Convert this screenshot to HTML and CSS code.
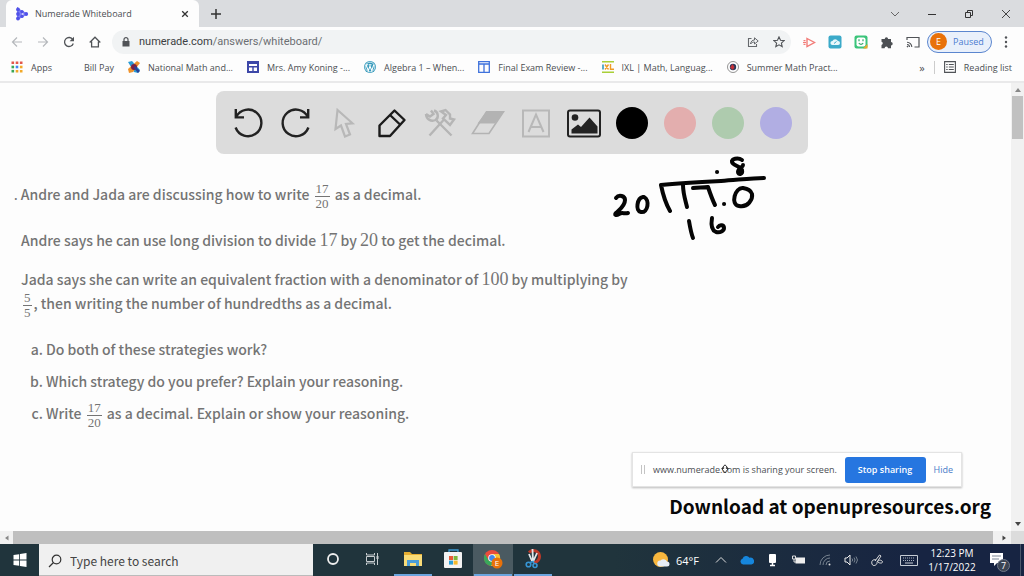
FILE: index.html
```html
<!DOCTYPE html>
<html lang="en">
<head>
<meta charset="utf-8">
<title>Numerade Whiteboard</title>
<link rel="stylesheet" href="styles.css">
</head>
<body>
<header class="browser">
  <div class="tabs">
    <div class="tab">
      <svg class="i14" viewBox="0 0 14 14"><path d="M3 2.500 11.200 7 3 11.500V2.500L7 9.400M3 11.500 7 4.600" fill="none" stroke="#7f80f5" stroke-width="2"/><g fill="#5051e8"><circle cx="3" cy="2.500" r="1.900"/><circle cx="3" cy="7" r="1.900"/><circle cx="3" cy="11.500" r="1.900"/><circle cx="7" cy="4.600" r="1.700"/><circle cx="7" cy="9.400" r="1.700"/><circle cx="11.200" cy="7" r="1.900"/></g></svg>
      <span class="tab-title">Numerade Whiteboard</span>
      <button class="plain" aria-label="Close tab"><svg class="i8" viewBox="0 0 8 8"><path d="m1.200 1.200 5.600 5.600m0-5.600L1.200 6.800" stroke="#333" stroke-width="1.300"/></svg></button>
    </div>
    <button class="plain new-tab" aria-label="New tab"><svg class="i10" viewBox="0 0 10 10"><path d="M5 0v10M0 5h10" stroke="#333" stroke-width="1.500"/></svg></button>
    <div class="window-buttons">
      <button class="plain" aria-label="Search tabs"><svg class="i10" viewBox="0 0 10 10"><path d="m1 3 4 4 4-4" fill="none" stroke="#666"/></svg></button>
      <button class="plain" aria-label="Minimize"><svg class="i10" viewBox="0 0 10 10"><path d="M1 5.500h8" stroke="#333"/></svg></button>
      <button class="plain" aria-label="Restore"><svg class="i10" viewBox="0 0 10 10"><path d="M1.500 3.500h5v5h-5zM3.500 3.500v-2h5v5h-2" fill="none" stroke="#333"/></svg></button>
      <button class="plain" aria-label="Close"><svg class="i10" viewBox="0 0 10 10"><path d="m1 1 8 8m0-8L1 9" stroke="#444"/></svg></button>
    </div>
  </div>
  <div class="toolbar">
    <div class="nav">
      <button class="plain" aria-label="Back"><svg class="i12" viewBox="0 0 12 12"><path d="M11 6H1.500M6 1.500 1.500 6 6 10.500" fill="none" stroke="#b5b8bc" stroke-width="1.200"/></svg></button>
      <button class="plain" aria-label="Forward"><svg class="i12" viewBox="0 0 12 12"><path d="M1 6h9.500M6 1.500 10.500 6 6 10.500" fill="none" stroke="#b5b8bc" stroke-width="1.200"/></svg></button>
      <button class="plain" aria-label="Reload"><svg class="i12" viewBox="0 0 12 12"><path d="M9.800 3.500A4.500 4.500 0 1 0 10.300 7.500" fill="none" stroke="#505357" stroke-width="1.300"/><path d="M11 .8v4.400H6.600z" fill="#505357"/></svg></button>
      <button class="plain" aria-label="Home"><svg class="i12" viewBox="0 0 12 12"><path d="M.7 6.500 6 1.200l5.300 5.300M2.600 5.500v5.300h6.800V5.500" fill="none" stroke="#505357" stroke-width="1.300"/></svg></button>
    </div>
    <div class="omnibox">
      <svg class="i10" viewBox="0 0 10 10"><path d="M1.500 4h7v5.500h-7z" fill="#505357"/><path d="M3 4V2.600a2 2 0 0 1 4 0V4" fill="none" stroke="#505357" stroke-width="1.200"/></svg>
      <span class="url">numerade.com<span>/answers/whiteboard/</span></span>
      <button class="plain" aria-label="Share"><svg class="i12" viewBox="0 0 12 12"><path d="M4.500 2.500h-3v8h8V8" fill="none" stroke="#65686c" stroke-width="1.100"/><path d="M3.500 8c.3-2.500 1.700-4 4-4V1.800L11.200 5 7.500 8V6C5.800 6 4.500 6.700 3.500 8z" fill="none" stroke="#65686c"/></svg></button>
      <button class="plain" aria-label="Bookmark"><svg class="i12" viewBox="0 0 12 12"><path d="m6 .9 1.500 3.400 3.700.3-2.800 2.500.8 3.600L6 8.800l-3.200 1.900.8-3.600L.8 4.600l3.700-.3z" fill="none" stroke="#505357" stroke-width="1.100"/></svg></button>
    </div>
    <div class="extensions">
      <svg class="i14" viewBox="0 0 14 14"><path d="M5 3.500 12.500 7.500 5 11.500z" fill="none" stroke="#f27c78" stroke-width="1.400"/><path d="M1.500 5.700h2M1 7.500h3M1.500 9.300h2" stroke="#f27c78" stroke-width="1.200"/></svg>
      <svg class="i14" viewBox="0 0 14 14"><rect x=".5" y=".5" width="13" height="13" rx="2" fill="#3baac9"/><path d="M4.400 10a2 2 0 0 1 0-4 3 3 0 0 1 5.500 0 2 2 0 0 1 .2 4z" fill="#e7f7fb"/><path d="m6 8.500 2.500-2" stroke="#3baac9"/></svg>
      <svg class="i14" viewBox="0 0 14 14"><rect x=".5" y=".5" width="13" height="13" rx="2" fill="#3bc47a"/><path d="M13.500 9v4.500H9z" fill="#f0a52b"/><rect x="2.500" y="2.500" width="9" height="9" rx="2" fill="#fff"/><path d="M5 4.300v2m4-2v2M4.800 8.200Q7 10.500 9.200 8.200" fill="none" stroke="#33a86b" stroke-width="1.200"/></svg>
      <svg class="i14" viewBox="0 0 14 14"><path d="M1.500 4h3.200a1.700 1.700 0 1 1 3.400 0H11v3a1.700 1.700 0 1 1 0 3.400v2.800H8a1.700 1.700 0 0 0-3.400 0H1.500V10a1.700 1.700 0 0 0 0-3.300z" fill="#4c4f53"/></svg>
      <svg class="i14" viewBox="0 0 14 14"><path d="M1 5V2.500h12v9.500H8.500" fill="none" stroke="#505357" stroke-width="1.200"/><path d="M1 7.200A4.800 4.800 0 0 1 5.800 12M1 9.500A2.500 2.500 0 0 1 3.500 12" fill="none" stroke="#505357" stroke-width="1.100"/><circle cx="1.500" cy="11.600" r=".8" fill="#505357"/></svg>
    </div>
    <button class="profile"><span class="avatar">E</span>Paused</button>
    <button class="plain menu" aria-label="Menu"><svg class="i12" viewBox="0 0 12 12"><g fill="#505357"><circle cx="6" cy="1.500" r="1.200"/><circle cx="6" cy="6" r="1.200"/><circle cx="6" cy="10.500" r="1.200"/></g></svg></button>
  </div>
  <nav class="bookmarks">
    <a href="#"><svg class="i12" viewBox="0 0 12 12"><path d="M.5.500h2.600v2.600H.5zM4.700.500h2.600v2.600H4.700zM8.900.500h2.600v2.600H8.900z" fill="#e2574c"/><path d="M.5 4.700h2.600v2.600H.5z" fill="#3aa757"/><path d="M4.700 4.700h2.600v2.600H4.700z" fill="#4285f4"/><path d="M8.900 4.700h2.600v2.600H8.900z" fill="#f2a928"/><path d="M.5 8.900h2.600v2.600H.5z" fill="#3aa757"/><path d="M4.700 8.900h2.600v2.600H4.700zM8.900 8.900h2.600v2.600H8.900z" fill="#f2a928"/></svg>Apps</a>
    <a href="#" class="no-icon">Bill Pay</a>
    <a href="#"><svg class="i12" viewBox="0 0 12 12"><path d="M0 1 4 0l8 9-2 3-4-1z" fill="#2a9bd6"/><path d="m12 2-3-2-9 8 1 4 4-1z" fill="#f0932b"/><circle cx="6" cy="6" r="3" fill="#762248"/><path d="m7 5 5 5-2 2-4-5z" fill="#27439a"/></svg>National Math and...</a>
    <a href="#"><svg class="i12" viewBox="0 0 12 12"><path fill="#3d47a8" d="M0 0h12v12H0z"/><path d="M2 3h8v2H2zM2 6.500h3.300V10H2zM6.700 6.500H10V10H6.700z" fill="#fff"/></svg>Mrs. Amy Koning -...</a>
    <a href="#"><svg class="i12" viewBox="0 0 12 12"><circle cx="6" cy="6" r="6" fill="#3499bb"/><circle cx="6" cy="6" r="4.800" fill="none" stroke="#fff" stroke-width=".7"/><path d="m2 3.700 2.300 6L6 5l1.800 4.700 2-6M1.800 3.700h2.500M5 3.700h2.500" fill="none" stroke="#fff" stroke-width="1.100"/></svg>Algebra 1 – When...</a>
    <a href="#"><svg class="i12" viewBox="0 0 12 12"><path d="M.7.700h10.600v10.600H.7zM.7 3h10.600M6 3v8.300" fill="none" stroke="#3f72dc" stroke-width="1.300"/></svg>Final Exam Review -...</a>
    <a href="#"><svg class="i12" viewBox="0 0 12 12"><path d="M0 0h12v1.500H0zM0 10.500h12V12H0z" fill="#a9cf38"/><path d="M1 3.500v5" stroke="#2390b8" stroke-width="1.500"/><path d="m3 3.500 3.500 5m0-5L3 8.500M8.500 3v5.200H12" fill="none" stroke="#ef9b28" stroke-width="1.400"/></svg>IXL | Math, Languag...</a>
    <a href="#"><svg class="i12" viewBox="0 0 12 12"><circle cx="6" cy="6" r="5.500" fill="#fff" stroke="#777" stroke-width=".8"/><circle cx="6" cy="6" r="3.200" fill="#29385b"/><path d="M3 6.500 5.500 3l2 3L6 9z" fill="#c33038"/></svg>Summer Math Pract...</a>
    <button class="plain more">»</button>
    <a href="#" class="reading"><svg class="i12" viewBox="0 0 12 12"><path d="M.6.600h10.800v10.800H.6z" fill="none" stroke="#505357" stroke-width="1.100"/><path d="M2.200 3.500h1.500M4.800 3.500h5M2.200 6h1.500M4.800 6h5M2.200 8.500h1.500M4.800 8.500h5" stroke="#505357"/></svg>Reading list</a>
  </nav>
</header>

<main class="page">
  <div class="board">
    <div class="tools">
      <button aria-label="Undo"><svg class="i36" viewBox="0 0 36 36"><path d="M5.600 22.500a13.300 13.300 0 1 0 .6-10.600" fill="none" stroke="#222" stroke-width="2.400"/><path d="M5.800 4v8.400H14" fill="none" stroke="#222" stroke-width="2.400"/></svg></button>
      <button aria-label="Redo"><svg class="i36" viewBox="0 0 36 36"><path d="M30.400 22.500a13.300 13.300 0 1 1-.6-10.600" fill="none" stroke="#222" stroke-width="2.400"/><path d="M30.200 4v8.400H22" fill="none" stroke="#222" stroke-width="2.400"/></svg></button>
      <button aria-label="Select"><svg class="i36" viewBox="0 0 36 36"><path d="M11.500 5 9.500 24l5.500-3.500 4 11 5-2-4-10.500 6.500-.7z" fill="none" stroke="#b8b8b8" stroke-width="2.200"/></svg></button>
      <button aria-label="Pen"><svg class="i36" viewBox="0 0 36 36"><path d="M5.500 31V20.500L20.500 5.500 30.500 15 16 31zM16 10l10 9.500" fill="none" stroke="#1b1b1b" stroke-width="2.400" stroke-linejoin="round"/></svg></button>
      <button aria-label="Tools"><svg class="i36" viewBox="0 0 36 36"><g fill="none" stroke="#b5b5b5" stroke-width="2.400"><path d="m14.500 15.500 15 15M22 14.500 7.500 30.500"/><path d="M4 9c0 5 5 8 9.500 6 3.500-2 3-8-1.500-9.500M4 9l4 2.500L11.500 9 9 5.500"/><path d="m19 6.500 4.500-1.500 4.500 4.500v4l4 1-4 5.500-7-6.500 3-3.500z"/></g></svg></button>
      <button aria-label="Eraser"><svg class="i36" viewBox="0 0 36 36"><path d="M16.500 6.500H34L25 18.500H7.500z" fill="#b3b3b3"/><path d="M16.500 6.800h17L19 28.500H2.500z" fill="none" stroke="#b3b3b3" stroke-width="1.600"/></svg></button>
      <button aria-label="Text"><svg class="i36" viewBox="0 0 36 36"><path d="M5 5.500h26v26H5zM10.500 27 18 9.500 25.500 27M13 22h10" fill="none" stroke="#b8b8b8" stroke-width="2"/></svg></button>
      <button aria-label="Image"><svg class="i36" viewBox="0 0 36 36"><rect x="2" y="5.500" width="32" height="26" rx="2" fill="none" stroke="#222" stroke-width="2"/><circle cx="9" cy="12.500" r="3.300" fill="#222"/><path d="M5.500 28.500v-4l6.500-5 3 2.500 8.500-9.500 8 9v7z" fill="#222"/></svg></button>
      <button class="swatch black" aria-label="Black"></button>
      <button class="swatch red" aria-label="Red"></button>
      <button class="swatch green" aria-label="Green"></button>
      <button class="swatch purple" aria-label="Purple"></button>
    </div>

    <article class="problem">
      <p class="first"><small>.</small> Andre and Jada are discussing how to write <span class="frac"><span>17</span><span>20</span></span> as a decimal.</p>
      <p>Andre says he can use long division to divide <b>17</b> by <b>20</b> to get the decimal.</p>
      <p class="long">Jada says she can write an equivalent fraction with a denominator of <b>100</b> by multiplying by<br><span class="frac"><span>5</span><span>5</span></span>, then writing the number of hundredths as a decimal.</p>
      <ol>
        <li>Do both of these strategies work?</li>
        <li>Which strategy do you prefer? Explain your reasoning.</li>
        <li>Write <span class="frac"><span>17</span><span>20</span></span> as a decimal. Explain or show your reasoning.</li>
      </ol>
    </article>

    <svg class="ink" viewBox="0 0 180 100" role="img" aria-label="Long division of 17.0 by 20">
      <g fill="none" stroke="#050505" stroke-width="4" stroke-linecap="round" stroke-linejoin="round">
        <path d="M16 48c3-4 9-2 9 2 0 6-5 9-9 13-2 2 0 3 3 1s5 0 9-1"/>
        <path d="M43 47c-6 1-8 14-2 15 7 1 9-12 3-15z"/>
        <path d="M70 61C66 54 63 45 61 35c20-2 40-3 60-4 16-1 30-3 43-3"/>
        <path d="M83 35c0 8 2 14 4 22M93 38c5-1 10 0 15-1 2 6 4 12 7 18"/>
        <path d="M143 38c-8-1-13 17-4 18 9 2 14-7 13-12-1-4-4-5-9-6z"/>
        <path d="M142 10c-4-3-11-1-10 2 1 4 9 4 10 8 1 5-4 5-4 2 0-4 5-4 5-7"/>
        <path d="M89 71c1 6 2 12 4 17M112 68c-1 6-1 12 4 14 4 1 8-1 8-4s-4-4-6-1"/>
        <path d="M117 22h.1M124 54h.1"/>
      </g>
    </svg>

    <aside class="sharing">
      <i class="grip"></i>
      <span class="message">www.numerade.com is sharing your screen.</span>
      <svg class="cursor" viewBox="0 0 10 10"><path d="m5 .8 2.500 2.700H6.300v1h2L5 9 1.700 4.500h2v-1H2.500z" fill="#fff" stroke="#333"/></svg>
      <button class="stop">Stop sharing</button>
      <a href="#">Hide</a>
    </aside>
    <div class="download">Download at openupresources.org</div>
  </div>
  <div class="vscroll"><svg class="i8" viewBox="0 0 8 8"><path d="m1 6 3-4 3 4z" fill="#888"/></svg><i></i><svg class="i8 end" viewBox="0 0 8 8"><path d="m1 2 3 4 3-4z" fill="#444"/></svg></div>
</main>
<div class="hscroll"><span class="arrow"><svg class="i8" viewBox="0 0 8 8"><path d="M5.500 1.500v5L2 4z" fill="#888"/></svg></span><i></i><span class="arrow wide"><svg class="i8" viewBox="0 0 8 8"><path d="M2.500 1.500v5L6 4z" fill="#444"/></svg></span><span class="corner"></span></div>

<footer class="taskbar">
  <button class="start" aria-label="Start"><svg class="i14" viewBox="0 0 14 14"><path d="m.5 2 5.700-.8v5.400H.5zM7 1l6.500-.9v6.500H7zM.5 7.400h5.700v5.400L.5 12zM7 7.400h6.500v6.500L7 13z" fill="#fff"/></svg></button>
  <label class="search"><svg class="i14" viewBox="0 0 14 14"><circle cx="8.500" cy="5.500" r="4.300" fill="none" stroke="#333" stroke-width="1.200"/><path d="M5.500 8.500 1 13" stroke="#333" stroke-width="1.300"/></svg><input type="text" placeholder="Type here to search" aria-label="Search"></label>
  <div class="apps">
    <button aria-label="Cortana"><svg class="i20" viewBox="0 0 20 20"><circle cx="10" cy="10" r="5" fill="none" stroke="#eee" stroke-width="1.800"/></svg></button>
    <button aria-label="Task view"><svg class="i20" viewBox="0 0 20 20"><path d="M3.500 4v2h8V4M3.500 16v-2h8v2M3.500 7.500h8v5h-8zM14.500 4v12" fill="none" stroke="#c8cdd0"/><path d="M13.500 7h2v3h-2z" fill="#c8cdd0"/></svg></button>
    <button class="running" aria-label="File Explorer"><svg class="i20" viewBox="0 0 20 20"><path d="M1 3h6l2 2h10v12H1z" fill="#e5ad32"/><path d="M1 6h18v11H1z" fill="#f9dc78"/><path d="M4 17v-6h12v6h-3v-3H7v3z" fill="#4b9dd9"/></svg></button>
    <button aria-label="Store"><svg class="i20" viewBox="0 0 20 20"><path d="M6 4V1h9v3" fill="none" stroke="#3f9bd2" stroke-width="1.300"/><rect x="1" y="3" width="18" height="16" rx="1" fill="#f3f3f3"/><path d="M6 7h4v4H6z" fill="#e75a38"/><path d="M10.600 7h4v4h-4z" fill="#7cb83d"/><path d="M6 11.600h4v4H6z" fill="#289ed8"/><path d="M10.600 11.600h4v4h-4z" fill="#f3b92c"/></svg></button>
    <button class="running active" aria-label="Chrome"><svg class="i20" viewBox="0 0 20 20"><circle cx="9" cy="9" r="8" fill="#ea4b3c"/><path d="M2 5a8 8 0 0 0 6 12l4-6-6 1z" fill="#39a85b"/><path d="M9 5h7a8 8 0 0 1-8 12l5-7z" fill="#f6c338"/><circle cx="9" cy="9" r="3.800" fill="#fff"/><circle cx="9" cy="9" r="2.900" fill="#4388ec"/><circle cx="14" cy="14" r="5.500" fill="#e8710a"/><text x="14" y="17" class="mini-e">E</text></svg></button>
    <button class="running" aria-label="Snipping Tool"><svg class="i20" viewBox="0 0 20 20"><path d="M6 3.500a6 6 0 1 1 4 10" fill="none" stroke="#bd3929" stroke-width="3"/><path d="m9.500 0 .5 13M14 4l-4 9M6 5l3 7" stroke="#e2e6e9" stroke-width="1.800"/><g fill="none" stroke="#3795d4" stroke-width="1.600"><circle cx="5.500" cy="15.500" r="2.300"/><circle cx="12" cy="16.500" r="2"/><path d="m7 13.500 3-1 1 2"/></g></svg></button>
  </div>
  <div class="tray">
    <button class="weather"><svg class="i18" viewBox="0 0 18 18"><circle cx="8.500" cy="8.500" r="7.500" fill="#f8b73e"/><path d="M8 15.500a3 3 0 0 1 .5-6 4 4 0 0 1 6.500 1 2.500 2.500 0 0 1 0 5z" fill="#e6edf6"/></svg>64°F</button>
    <button aria-label="Hidden icons"><svg class="i14" viewBox="0 0 14 14"><path d="m2 9.500 5-5 5 5" fill="none" stroke="#ddd"/></svg></button>
    <button aria-label="OneDrive"><svg class="i14" viewBox="0 0 14 14"><path d="M3 11.500a3 3 0 0 1-.5-5.800 4 4 0 0 1 7-1 3.500 3.500 0 0 1 2 6.800z" fill="#1686dc"/></svg></button>
    <button aria-label="Microphone"><svg class="i14" viewBox="0 0 14 14"><rect x="3" y="1" width="7" height="9" rx="1" fill="#fff"/><path d="M6.500 10v3M4 12.500h5" stroke="#fff" stroke-width="1.500"/></svg></button>
    <button aria-label="Battery"><svg class="i14" viewBox="0 0 14 14"><path d="M3.500 4.500H13v6H3.500z" fill="#eee"/><path d="M.5 3h3v3h-3zM2 6v3h2" fill="none" stroke="#ddd"/></svg></button>
    <button aria-label="Wi-Fi"><svg class="i14" viewBox="0 0 14 14"><path d="M2 12A10 10 0 0 1 12 2M5 12a7 7 0 0 1 7-7M8 12a4 4 0 0 1 4-4" fill="none" stroke="#76828f"/><circle cx="11.500" cy="11.500" r="1" fill="#ddd"/></svg></button>
    <button aria-label="Volume"><svg class="i14" viewBox="0 0 14 14"><path d="M1 5h2l3-3v10L3 9H1z" fill="none" stroke="#eee"/><path d="M8 5.500q1.500 1.500 0 3M10 4.500q2 2.500 0 5M12 3.500q3 3.500 0 7" fill="none" stroke="#76828f"/></svg></button>
    <button aria-label="Pen menu"><svg class="i14" viewBox="0 0 14 14"><path d="m5 8 4.500-6L11 3 7 9M6 7C3 6 1 8 2 11s5 1 5-1 3-4 5-2-2 3-4 1" fill="none" stroke="#ddd"/></svg></button>
    <button class="keyboard" aria-label="Touch keyboard"><svg class="i18" viewBox="0 0 18 18"><path d="M.5 4.500h17v10H.5z" fill="none" stroke="#c5cbd4"/><path d="M3 7h12M3 9.500h12" stroke="#a8b0be" stroke-dasharray="1 1"/><path d="M5 12h8" stroke="#c5cbd4"/></svg></button>
    <div class="clock"><span>12:23 PM</span><span>1/17/2022</span></div>
    <button class="notes" aria-label="Notifications"><svg class="i18" viewBox="0 0 18 18"><path d="M1 2h13v10H8l-3 3v-3H1z" fill="#fff"/><path d="M3 5h9M3 8h7" stroke="#7d8796"/></svg><span class="count">7</span></button>
  </div>
</footer>
</body>
</html>
```
FILE: styles.css
```css
* { box-sizing: border-box; }
body {
  margin: 0;
  height: 100vh;
  display: flex;
  flex-direction: column;
  overflow: hidden;
  background: #fdfdfd;
  color: #4b4e52;
  font-family: "Open Sans", "Noto Sans", sans-serif;
  font-size: 9px;
}
button { border: 0; padding: 0; background: none; font: inherit; color: inherit; }
a { color: inherit; text-decoration: none; }
svg { display: block; flex: none; }
.plain { display: flex; align-items: center; justify-content: center; }
.i8 { width: 8px; height: 8px; }
.i10 { width: 10px; height: 10px; }
.i12 { width: 12px; height: 12px; }
.i14 { width: 14px; height: 14px; }
.i18 { width: 18px; height: 18px; }
.i20 { width: 20px; height: 20px; }
.i36 { width: 36px; height: 36px; }

.browser { flex: none; border-bottom: 2px solid #e9e9ea; }
.tabs { height: 27px; display: flex; align-items: center; background: #dadcdf; padding-left: 6px; }
.tab { align-self: stretch; width: 193px; display: flex; align-items: center; gap: 6px; padding: 0 10px 0 9px; background: #fdfdfd; border-radius: 6px 6px 0 0; }
.tab-title { flex: 1; font-size: 9px; }
.new-tab { margin-left: 12px; }
.window-buttons { margin-left: auto; display: flex; }
.window-buttons button { width: 37px; height: 24px; }

.toolbar { height: 30px; display: flex; align-items: center; padding: 0 12px 1px 11px; }
.nav { display: flex; gap: 14px; width: 101px; }
.omnibox { flex: 1; height: 24px; border-radius: 12px; background: #f1f3f4; display: flex; align-items: center; gap: 8px; padding: 0 3px 0 9px; }
.omnibox button { width: 18px; }
.url { flex: 1; font-family: Roboto, sans-serif; font-size: 11px; color: #3c3f43; }
.url span { color: #6b6e72; }
.extensions { display: flex; gap: 12px; padding: 0 7px 0 11px; }
.profile { width: 65px; height: 22px; display: flex; align-items: center; gap: 6px; padding-left: 2px; border: 1px solid #5b86cf; border-radius: 11px; background: #e9f0fb; color: #4a7bd0; }
.avatar { width: 17px; height: 17px; line-height: 17px; border-radius: 50%; background: #e8710a; color: #fff; text-align: center; }
.menu { margin-left: 8px; }

.bookmarks { height: 24px; display: flex; align-items: center; gap: 14px; padding: 0 12px 4px 11px; white-space: nowrap; }
.bookmarks a { display: flex; align-items: center; gap: 8px; }
.bookmarks .no-icon { padding-left: 18px; }
.more { margin-left: auto; font-size: 11px; }
.bookmarks .reading { border-left: 1px solid #ccc; padding-left: 9px; margin-left: -5px; }

.page { flex: 1; min-height: 0; display: flex; }
.board { flex: 1; position: relative; overflow: hidden; padding-top: 8px; }
.tools { width: 592px; max-width: 100%; margin-left: 216px; padding: 8px; border-radius: 8px; background: #dcdcdc; display: flex; }
.tools button { flex: 1; height: 47px; display: flex; align-items: center; justify-content: center; }
.tools .swatch::before { content: ""; width: 32px; height: 32px; border-radius: 50%; background: #000; }
.tools .red::before { background: #e3aeae; }
.tools .green::before { background: #aecbae; }
.tools .purple::before { background: #b1aee3; }

.problem { padding: 28px 0 0 21px; color: #747474; font-family: "Noto Sans CJK SC", sans-serif; font-weight: 500; font-size: 14px; line-height: 24px; white-space: nowrap; }
.problem p { margin: 0 0 15px; }
.problem .first { margin-left: -7px; margin-bottom: 17px; }
.problem .first small { font-size: 12px; }
.problem .long { margin-bottom: 17px; }
.problem b { font-family: "Liberation Serif", serif; font-weight: 400; font-size: 18px; line-height: 20px; }
.problem ol { margin: 0; padding: 0 0 0 25px; list-style: lower-alpha; }
.problem li { margin-bottom: 8px; }
.frac { display: inline-flex; flex-direction: column; vertical-align: middle; text-align: center; font-family: "Liberation Serif", serif; font-weight: 400; font-size: 13px; line-height: 14px; margin: 0 2px; }
.frac span { padding: 0 1px; }
.frac span + span { border-top: 1px solid #747474; }

.ink { position: absolute; left: 600px; top: 67px; width: 180px; height: 100px; }
.sharing { position: absolute; right: 49px; bottom: 44px; width: 330px; height: 35px; display: flex; align-items: center; padding: 0 8px; background: #fff; border: 1px solid #e4e4e4; box-shadow: 0 1px 2px #bbb; font-size: 9px; }
.grip { width: 4px; height: 9px; border: solid #c4c4c4; border-width: 0 1px; margin-right: 8px; }
.message { flex: 1; white-space: nowrap; }
.cursor { position: absolute; left: 87px; top: 11px; width: 10px; height: 10px; }
.stop { width: 81px; height: 26px; margin-right: 8px; border-radius: 3px; background: #2676e0; color: #fff; font-weight: 600; }
.sharing a { color: #4a7cc9; }
.download { position: absolute; right: 20px; bottom: 10px; color: #080808; font: 700 19px/30px "Noto Sans CJK SC", sans-serif; white-space: nowrap; }

.vscroll { width: 13px; background: #f1f1f1; display: flex; flex-direction: column; align-items: center; padding: 3px 0; }
.vscroll i { width: 11px; height: 43px; margin-top: 2px; background: #c1c1c1; }
.vscroll .end { margin-top: auto; }
.hscroll { flex: none; height: 13px; display: flex; background: #f1f1f1; }
.hscroll i { flex: 1; background: #bfbfbf; }
.arrow { width: 13px; display: flex; align-items: center; justify-content: center; }
.arrow.wide { width: 18px; padding-left: 4px; }
.corner { width: 13px; background: #dcdcdc; }

.taskbar { flex: none; height: 32px; display: flex; background: linear-gradient(90deg, #20343c 0, #20343c 60%, #172442 90%); color: #fff; }
.taskbar button { display: flex; align-items: center; justify-content: center; }
.start { width: 39px; }
.search { width: 274px; display: flex; align-items: center; gap: 8px; padding: 2px 0 0 9px; background: #f0f0f0; border-bottom: 1px solid #bbb; }
.search input { flex: 1; min-width: 0; border: 0; padding: 0; background: none; font: 12px "Noto Sans CJK SC", sans-serif; }
.search input::placeholder { color: #444; opacity: 1; }
.apps { display: flex; }
.apps button { width: 40px; border-bottom: 2px solid transparent; }
.apps .running { border-image: linear-gradient(90deg, transparent 8%, #6ba5de 8%, #6ba5de 92%, transparent 92%) 2; border-style: solid; border-width: 0 0 2px; }
.apps .active { background: #4a5a61; }
.mini-e { fill: #fff; font-size: 8px; text-anchor: middle; }
.tray { margin-left: auto; display: flex; border-right: 1px solid #4b576b; margin-right: 3px; }
.tray button { width: 26px; }
.tray .weather { width: 56px; gap: 6px; justify-content: flex-start; font-size: 11px; }
.tray .keyboard { width: 38px; }
.clock { width: 48px; display: flex; flex-direction: column; justify-content: center; align-items: center; font-size: 10px; line-height: 14px; }
.tray .notes { width: 44px; position: relative; }
.count { position: absolute; right: 10px; bottom: 4px; width: 13px; height: 13px; border-radius: 50%; background: #3b4452; border: 1px solid #707989; font-size: 9px; line-height: 11px; text-align: center; }
```
